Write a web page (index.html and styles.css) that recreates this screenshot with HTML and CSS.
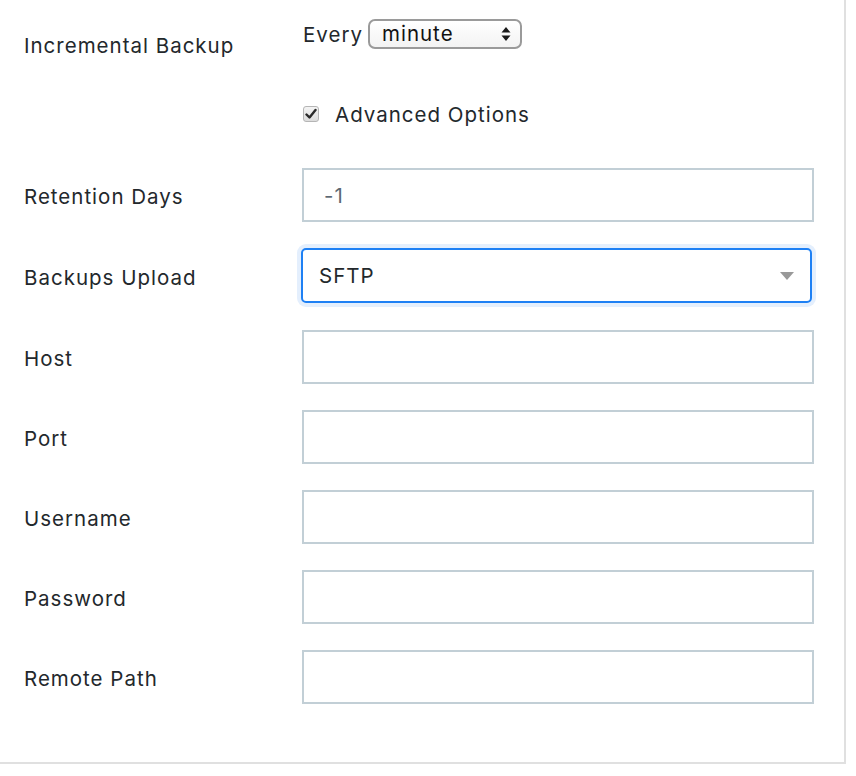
FILE: index.html
```html
<!DOCTYPE html>
<html lang="en">
<head>
<meta charset="utf-8">
<title>Backup Settings</title>
<link rel="stylesheet" href="styles.css">
</head>
<body>
<div class="panel">
  <div class="row row-incremental">
    <label class="label label-top">Incremental Backup</label>
    <div class="field-stack">
      <div class="every">
        <span class="every-text">Every</span>
        <span class="mini-select">
          <span class="mini-value">minute</span>
          <svg class="mini-arrows" width="10" height="16" viewBox="0 0 10 16"><path d="M5 1 L9.5 6.5 L0.5 6.5 Z M5 15 L9.5 9.5 L0.5 9.5 Z" fill="#1a1a1a"/></svg>
        </span>
      </div>
      <div class="check-row">
        <span class="checkbox">
          <svg width="12" height="12" viewBox="0 0 12 12"><path d="M1.5 6.5 L4.5 9.5 L10.5 2" fill="none" stroke="#2a2a2a" stroke-width="2.4" stroke-linecap="round" stroke-linejoin="round"/></svg>
        </span>
        <span class="check-label">Advanced Options</span>
      </div>
    </div>
  </div>

  <div class="row">
    <label class="label">Retention Days</label>
    <div class="input input-value">-1</div>
  </div>

  <div class="row row-select">
    <label class="label">Backups Upload</label>
    <div class="select-focus">
      <span class="select-value">SFTP</span>
      <svg class="caret" width="14" height="8" viewBox="0 0 14 8"><path d="M0 0 L14 0 L7 8 Z" fill="#999"/></svg>
    </div>
  </div>

  <div class="row">
    <label class="label">Host</label>
    <div class="input"></div>
  </div>
  <div class="row">
    <label class="label">Port</label>
    <div class="input"></div>
  </div>
  <div class="row">
    <label class="label">Username</label>
    <div class="input"></div>
  </div>
  <div class="row">
    <label class="label">Password</label>
    <div class="input"></div>
  </div>
  <div class="row">
    <label class="label">Remote Path</label>
    <div class="input"></div>
  </div>
</div>
</body>
</html>
```
FILE: styles.css
```css
html, body {
  margin: 0;
  padding: 0;
  background: #ffffff;
}
body {
  font-family: "Inter", "Roboto", "Liberation Sans", sans-serif;
  color: #23282c;
  font-size: 20.5px;
  letter-spacing: 1px;
}
.panel {
  box-sizing: border-box;
  width: 846px;
  height: 764px;
  border-right: 2px solid #e0e0e0;
  border-bottom: 2px solid #e0e0e0;
  padding: 19px 32px 0 24px;
  display: flex;
  flex-direction: column;
  gap: 26px;
}
.row {
  display: grid;
  grid-template-columns: 278px 512px;
  align-items: center;
}
.row-incremental {
  align-items: start;
  margin-bottom: 13px;
}
.row-select {
  margin-bottom: 1px;
}
.label {
  line-height: 24px;
  padding-top: 4px;
}
.label-top {
  padding-top: 15px;
}
.field-stack {
  display: flex;
  flex-direction: column;
  gap: 50px;
}
.every {
  display: flex;
  align-items: center;
  height: 30px;
  gap: 5px;
}
.every-text {
  padding-left: 1px;
}
.mini-select {
  box-sizing: border-box;
  width: 154px;
  height: 30px;
  border: 2px solid #9a9a9a;
  border-radius: 7px;
  display: flex;
  align-items: center;
  justify-content: space-between;
  padding: 0 9px 0 12px;
  background: linear-gradient(#ffffff, #f3f3f3);
  color: #111;
}
.mini-value {
  line-height: 24px;
}
.check-row {
  display: flex;
  align-items: center;
  height: 30px;
  padding-left: 1px;
  gap: 16px;
}
.checkbox {
  box-sizing: border-box;
  width: 16px;
  height: 16px;
  border: 1px solid #b5b5b5;
  border-radius: 3px;
  background: linear-gradient(#f4f4f4, #dcdcdc);
  display: flex;
  align-items: center;
  justify-content: center;
}
.input {
  box-sizing: border-box;
  width: 512px;
  height: 54px;
  border: 2px solid #c2cfd6;
  background: #fff;
  display: flex;
  align-items: center;
  padding-left: 20px;
}
.input-value {
  color: #5c6873;
}
.select-focus {
  box-sizing: border-box;
  width: 511px;
  height: 55px;
  margin-left: -1px;
  border: 2px solid #1e80f4;
  border-radius: 5px;
  box-shadow: 0 0 0 4px #e4effd;
  display: flex;
  align-items: center;
  justify-content: space-between;
  padding: 0 16px 0 16px;
  background: #fff;
}
.caret {
  margin-top: 1px;
}
```
